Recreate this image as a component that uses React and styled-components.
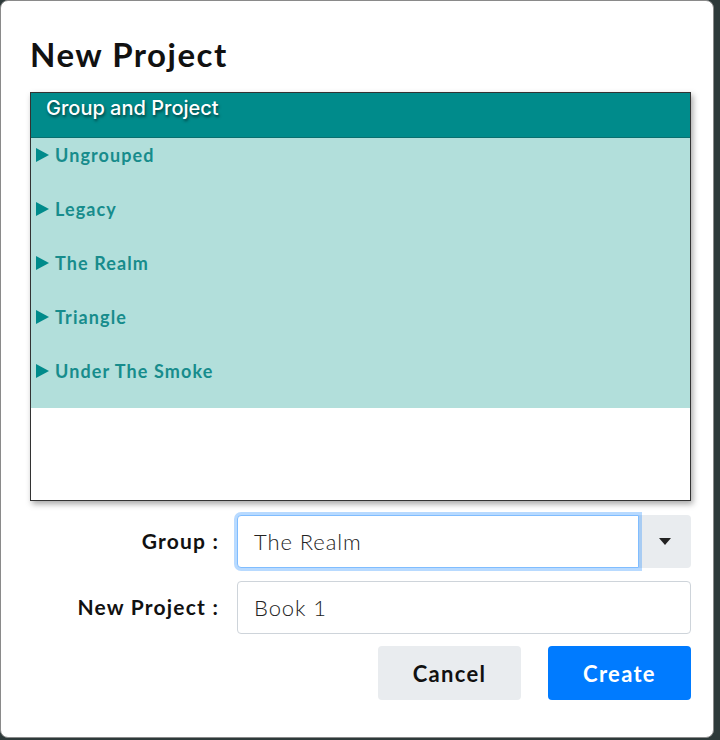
import styled, { createGlobalStyle } from 'styled-components';

const GlobalStyle = createGlobalStyle`
  html, body {
    margin: 0;
    padding: 0;
    background: #2e3a3a;
  }
  * {
    box-sizing: border-box;
  }
`;

const Modal = styled.div`
  width: 714px;
  height: 738px;
  background: #fff;
  border: 1px solid #8a8a8a;
  border-radius: 8px;
  padding: 0 22px 0 29px;
  display: flex;
  flex-direction: column;
  font-family: Lato, 'Noto Sans', sans-serif;
  color: #111;
`;

const Title = styled.h1`
  margin: 31px 0 0;
  font-size: 33px;
  line-height: 44px;
  font-weight: 700;
  height: 60px;
  letter-spacing: 1.5px;
`;

const TreePanel = styled.div`
  height: 409px;
  border: 1px solid #333;
  box-shadow: 2px 3px 6px rgba(0, 0, 0, 0.35);
  display: flex;
  flex-direction: column;
  background: #fff;
`;

const TreeHeader = styled.div`
  height: 45px;
  background: #008b8b;
  color: #fff;
  font-family: Inter, 'Noto Sans', sans-serif;
  font-size: 20px;
  font-weight: 500;
  padding: 3px 0 0 15px;
  text-shadow: 1px 2px 3px rgba(0, 0, 0, 0.55);
  border-bottom: 1px solid #0a6f6f;
`;

const TreeList = styled.ul`
  margin: 0;
  padding: 0;
  list-style: none;
  background: #b2dfdb;
`;

const TreeItem = styled.li`
  height: 54px;
  display: flex;
  align-items: flex-start;
  gap: 6px;
  padding: 6px 0 0 5px;
  color: #178c8c;
  font-size: 18px;
  font-weight: 700;
  line-height: 22px;
  letter-spacing: 1.1px;
`;

const Caret = styled.svg`
  width: 13px;
  height: 14px;
  margin-top: 4px;
  flex: none;
`;

const Form = styled.div`
  margin-top: 14px;
  display: grid;
  grid-template-columns: 189px 1fr;
  column-gap: 18px;
  row-gap: 13px;
  align-items: center;
`;

const Label = styled.label`
  text-align: right;
  font-size: 21px;
  font-weight: 700;
  color: #111;
  letter-spacing: 1.2px;
  padding-bottom: 2px;
`;

const InputGroup = styled.div`
  display: flex;
  height: 53px;
`;

const TextBox = styled.div`
  flex: 1;
  height: 53px;
  display: flex;
  align-items: center;
  padding: 0 16px;
  font-size: 22px;
  font-weight: 300;
  color: #222;
  letter-spacing: 0.9px;
  background: #fff;
  border: 1px solid ${(p) => (p.$focused ? '#80bdff' : '#ced4da')};
  border-radius: ${(p) => (p.$joined ? '4px 0 0 4px' : '4px')};
  box-shadow: ${(p) => (p.$focused ? '0 0 0 3px rgba(0, 123, 255, 0.28)' : 'none')};
  position: relative;
  z-index: 1;
`;

const DropButton = styled.div`
  width: 52px;
  background: #e9ecef;
  border-radius: 0 4px 4px 0;
  display: flex;
  align-items: center;
  justify-content: center;
`;

const Actions = styled.div`
  display: flex;
  justify-content: flex-end;
  gap: 27px;
  margin-top: 12px;
`;

const Button = styled.button`
  width: 143px;
  height: 54px;
  border: none;
  border-radius: 4px;
  font-family: Lato, 'Noto Sans', sans-serif;
  font-size: 22px;
  font-weight: 700;
  letter-spacing: 1.3px;
  background: ${(p) => (p.$primary ? '#007bff' : '#e9ecef')};
  color: ${(p) => (p.$primary ? '#fff' : '#111')};
`;

const groups = ['Ungrouped', 'Legacy', 'The Realm', 'Triangle', 'Under The Smoke'];

export default function App() {
  return (
    <>
      <GlobalStyle />
      <Modal>
        <Title>New Project</Title>
        <TreePanel>
          <TreeHeader>Group and Project</TreeHeader>
          <TreeList>
            {groups.map((g) => (
              <TreeItem key={g}>
                <Caret viewBox="0 0 13 14">
                  <polygon points="0,0 13,7 0,14" fill="#008b8b" />
                </Caret>
                {g}
              </TreeItem>
            ))}
          </TreeList>
        </TreePanel>
        <Form>
          <Label>Group :</Label>
          <InputGroup>
            <TextBox $focused $joined>The Realm</TextBox>
            <DropButton>
              <svg width="12" height="7" viewBox="0 0 12 7">
                <polygon points="0,0 12,0 6,7" fill="#222" />
              </svg>
            </DropButton>
          </InputGroup>
          <Label>New Project :</Label>
          <TextBox>Book 1</TextBox>
        </Form>
        <Actions>
          <Button>Cancel</Button>
          <Button $primary>Create</Button>
        </Actions>
      </Modal>
    </>
  );
}
